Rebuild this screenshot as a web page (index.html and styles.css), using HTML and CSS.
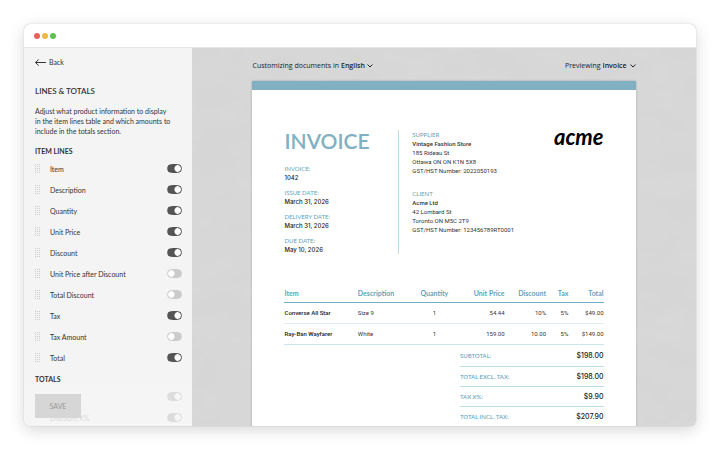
FILE: index.html
```html
<!DOCTYPE html>
<html lang="en">
<head>
    <meta charset="UTF-8">
    <meta name="viewport" content="width=device-width, initial-scale=1.0">
    <title>Lines &amp; Totals</title>
    <link rel="stylesheet" href="styles.css">
</head>
<body>
    <div class="window">
        <div class="titlebar">
            <span class="dot red"></span>
            <span class="dot yellow"></span>
            <span class="dot green"></span>
        </div>
        <div class="content">
            <aside class="sidebar">
                <a class="back" href="#">
                    <svg width="11" height="7" viewBox="0 0 11 7" fill="none" stroke="currentColor" stroke-linecap="round" stroke-linejoin="round"><path d="M10.5 3.5H.7M3.4.7.6 3.5l2.8 2.8"/></svg>
                    Back
                </a>
                <h1>LINES &amp; TOTALS</h1>
                <p class="intro">Adjust what product information to display in the item lines table and which amounts to include in the totals section.</p>

                <h2>ITEM LINES</h2>
                <ul class="options">
                    <li><span class="grip"></span><label for="item">Item</label><input type="checkbox" id="item" checked></li>
                    <li><span class="grip"></span><label for="description">Description</label><input type="checkbox" id="description" checked></li>
                    <li><span class="grip"></span><label for="quantity">Quantity</label><input type="checkbox" id="quantity" checked></li>
                    <li><span class="grip"></span><label for="unit-price">Unit Price</label><input type="checkbox" id="unit-price" checked></li>
                    <li><span class="grip"></span><label for="discount">Discount</label><input type="checkbox" id="discount" checked></li>
                    <li><span class="grip"></span><label for="unit-price-after">Unit Price after Discount</label><input type="checkbox" id="unit-price-after"></li>
                    <li><span class="grip"></span><label for="total-discount">Total Discount</label><input type="checkbox" id="total-discount"></li>
                    <li><span class="grip"></span><label for="tax">Tax</label><input type="checkbox" id="tax" checked></li>
                    <li><span class="grip"></span><label for="tax-amount">Tax Amount</label><input type="checkbox" id="tax-amount"></li>
                    <li><span class="grip"></span><label for="total">Total</label><input type="checkbox" id="total" checked></li>
                </ul>

                <h2 class="totals-title">TOTALS</h2>
                <ul class="options">
                    <li><span class="grip empty"></span><label for="subtotal">Subtotal</label><input type="checkbox" id="subtotal" checked></li>
                    <li><span class="grip empty"></span><label for="discount-x">Discount X%</label><input type="checkbox" id="discount-x" checked></li>
                </ul>

                <div class="save-bar">
                    <button class="save" type="button">SAVE</button>
                </div>
            </aside>

            <main class="preview">
                <div class="toolbar">
                    <div class="picker">
                        <label for="language">Customizing documents in</label>
                        <select id="language"><option>English</option></select>
                        <svg width="6" height="4" viewBox="0 0 6 4" fill="none" stroke="currentColor" stroke-linecap="round"><path d="M.8.8 3 3 5.2.8"/></svg>
                    </div>
                    <div class="picker">
                        <label for="document">Previewing</label>
                        <select id="document"><option>Invoice</option></select>
                        <svg width="6" height="4" viewBox="0 0 6 4" fill="none" stroke="currentColor" stroke-linecap="round"><path d="M.8.8 3 3 5.2.8"/></svg>
                    </div>
                </div>

                <article class="paper">
                    <header class="invoice-header">
                        <div class="meta">
                            <h2 class="invoice-title">INVOICE</h2>
                            <dl>
                                <dt>INVOICE:</dt>
                                <dd>1042</dd>
                                <dt>ISSUE DATE:</dt>
                                <dd>March 31, 2026</dd>
                                <dt>DELIVERY DATE:</dt>
                                <dd>March 31, 2026</dd>
                                <dt>DUE DATE:</dt>
                                <dd>May 10, 2026</dd>
                            </dl>
                        </div>
                        <div class="parties">
                            <address>
                                <span class="role">SUPPLIER</span>
                                <strong>Vintage Fashion Store</strong>
                                <span>185 Rideau St</span>
                                <span>Ottawa ON ON K1N 5X8</span>
                                <span>GST/HST Number: 2022050193</span>
                            </address>
                            <address>
                                <span class="role">CLIENT</span>
                                <strong>Acme Ltd</strong>
                                <span>42 Lombard St</span>
                                <span>Toronto ON M5C 2T9</span>
                                <span>GST/HST Number: 123456789RT0001</span>
                            </address>
                        </div>
                        <div class="logo">acme</div>
                    </header>

                    <table class="lines">
                        <thead>
                            <tr>
                                <th class="col-item">Item</th>
                                <th class="col-description">Description</th>
                                <th class="col-quantity">Quantity</th>
                                <th class="col-price">Unit Price</th>
                                <th class="col-discount">Discount</th>
                                <th class="col-tax">Tax</th>
                                <th class="col-total">Total</th>
                            </tr>
                        </thead>
                        <tbody>
                            <tr>
                                <td class="name">Converse All Star</td>
                                <td>Size 9</td>
                                <td class="center">1</td>
                                <td class="number">54.44</td>
                                <td class="number">10%</td>
                                <td class="number">5%</td>
                                <td class="number">$49.00</td>
                            </tr>
                            <tr>
                                <td class="name">Ray-Ban Wayfarer</td>
                                <td>White</td>
                                <td class="center">1</td>
                                <td class="number">159.00</td>
                                <td class="number">10.00</td>
                                <td class="number">5%</td>
                                <td class="number">$149.00</td>
                            </tr>
                        </tbody>
                    </table>

                    <table class="totals">
                        <tr><th>SUBTOTAL:</th><td>$198.00</td></tr>
                        <tr><th>TOTAL EXCL. TAX:</th><td>$198.00</td></tr>
                        <tr><th>TAX X%:</th><td>$9.90</td></tr>
                        <tr><th>TOTAL INCL. TAX:</th><td>$207.90</td></tr>
                    </table>
                </article>
            </main>
        </div>
    </div>
</body>
</html>
```
FILE: styles.css
```css
* {
    box-sizing: border-box;
}

body {
    margin: 0;
    padding: 24px;
    height: 100vh;
    background-color: #fff;
    color: #333;
    font-family: Lato, sans-serif;
    font-size: 7px;
    line-height: 10px;
}

h1, h2, p, ul, dl, dd {
    margin: 0;
    padding: 0;
}

.window {
    display: flex;
    flex-direction: column;
    height: 100%;
    overflow: hidden;
    border-radius: 6px;
    background-color: #fff;
    box-shadow: 0 0 1px rgba(0, 0, 0, 0.35), 0 4px 16px rgba(0, 0, 0, 0.16);
}

.titlebar {
    display: flex;
    flex: none;
    align-items: center;
    gap: 2px;
    height: 24px;
    padding: 0 10px;
    border-bottom: 1px solid #e6e6e6;
}

.dot {
    width: 6px;
    height: 6px;
    border-radius: 50%;
}

.red {
    background-color: #e9605a;
}

.yellow {
    background-color: #efb844;
}

.green {
    background-color: #5dc24c;
}

.content {
    display: flex;
    flex: 1;
    min-height: 0;
}

/* Sidebar */
.sidebar {
    position: relative;
    width: 25%;
    padding: 8px 10px 0 11px;
    overflow: hidden;
    background-color: #f4f4f4;
}

.back {
    display: flex;
    align-items: center;
    gap: 3px;
    height: 12px;
    color: #333;
    text-decoration: none;
}

.sidebar h1 {
    margin: 17px 0 9px;
    font-size: 8px;
    font-weight: 600;
    line-height: 12px;
}

.sidebar h2 {
    margin-top: 8px;
    font-size: 7px;
    font-weight: 700;
    line-height: 14px;
}

.sidebar .intro {
    padding-right: 10px;
}

.sidebar .totals-title {
    margin-top: 4px;
}

.options {
    list-style-type: none;
}

.options li {
    display: flex;
    align-items: center;
    height: 21px;
}

.options label {
    flex: 1;
}

.grip {
    width: 5px;
    height: 9px;
    margin-right: 10px;
    background-image: radial-gradient(circle at 0 0, #ccc 1px, transparent 1px);
    background-size: 2px 2px;
}

.empty {
    background-image: none;
}

.options input {
    appearance: none;
    width: 15px;
    height: 9px;
    margin: 0;
    border: 1px solid #cbcbcb;
    border-radius: 5px;
    background: radial-gradient(circle at 3px 50%, #fff 3px, #cbcbcb 4px);
    cursor: pointer;
}

.options input:checked {
    border-color: #555;
    background: radial-gradient(circle at 10px 50%, #fff 3px, #555 4px);
}

.save-bar {
    position: absolute;
    left: 0;
    right: 0;
    bottom: 0;
    padding: 10px 11px 8px;
    background-color: rgba(244, 244, 244, 0.85);
}

.save {
    display: block;
    width: 46px;
    height: 24px;
    border: none;
    background-color: #d6d6d6;
    color: #999;
    font-family: inherit;
    font-size: 7px;
}

/* Preview */
.preview {
    flex: 1;
    min-width: 0;
    padding: 12px 9% 0;
    overflow: hidden;
    background-color: #d8d8d8;
    background-image: url("data:image/svg+xml,%3Csvg xmlns='http://www.w3.org/2000/svg' width='504' height='378'%3E%3Cfilter id='n'%3E%3CfeTurbulence type='fractalNoise' baseFrequency='.02 .04' numOctaves='5'/%3E%3CfeColorMatrix values='0 0 0 0 .5 0 0 0 0 .5 0 0 0 0 .5 .16 0 0 0 -.04'/%3E%3C/filter%3E%3Crect width='100%25' height='100%25' filter='url(%23n)'/%3E%3C/svg%3E");
}

.toolbar {
    display: flex;
    justify-content: space-between;
    height: 21px;
    font-family: "Open Sans", sans-serif;
}

.picker {
    display: flex;
    align-items: center;
    gap: 2px;
    height: 12px;
    color: #222;
}

.picker select {
    appearance: none;
    height: 10px;
    padding: 0;
    border: none;
    background: none;
    color: inherit;
    font-family: inherit;
    font-size: inherit;
    font-weight: 600;
    line-height: 10px;
}

.paper {
    min-height: 100%;
    padding: 40px 32px 0;
    border-top: 9px solid #80b0c2;
    background-color: #fff;
    box-shadow: 0 0 2px rgba(0, 0, 0, 0.25);
    font-family: Inter, sans-serif;
}

.invoice-header {
    display: flex;
    align-items: flex-start;
    margin-bottom: 30px;
}

.meta {
    width: 36%;
    height: 124px;
    border-right: 1px solid #b9dce6;
}

.invoice-title {
    margin-bottom: 12px;
    color: #80b0c2;
    font-family: Lato, sans-serif;
    font-size: 21px;
    font-weight: 600;
    line-height: 22px;
}

.meta dt {
    color: #5fa3ba;
    font-family: Lato, sans-serif;
    font-size: 6px;
    line-height: 9px;
}

.meta dd {
    margin-bottom: 5px;
    color: #222;
    font-size: 6px;
    font-weight: 500;
    line-height: 10px;
}

.parties {
    flex: 1;
    padding-left: 13px;
}

.parties address {
    display: flex;
    flex-direction: column;
    margin-bottom: 14px;
    font-family: Roboto, sans-serif;
    font-size: 6px;
    font-style: normal;
    line-height: 9px;
    white-space: nowrap;
}

.parties strong {
    font-weight: 500;
}

.parties .role {
    color: #5fa3ba;
    font-family: Lato, sans-serif;
}

.logo {
    color: #000;
    font-family: Lato, cursive;
    font-size: 22px;
    font-style: italic;
    font-weight: 700;
    line-height: 14px;
}

.lines {
    width: 100%;
    border-collapse: collapse;
    table-layout: fixed;
}

.lines th {
    height: 18px;
    padding: 0;
    border-bottom: 1px solid #6fb0c4;
    color: #5fa3ba;
    font-family: Lato, sans-serif;
    font-size: 7px;
    font-weight: 700;
    text-align: right;
}

.lines td {
    height: 21px;
    padding: 0;
    border-bottom: 1px solid #e2ecef;
    font-family: Roboto, sans-serif;
    font-size: 6px;
}

.lines tr:last-child td {
    border-bottom-color: #cbe5ec;
}

.lines .name {
    color: #222;
    font-weight: 500;
    white-space: nowrap;
}

.lines .center {
    text-align: center;
}

.lines .number {
    text-align: right;
}

.lines .col-item {
    width: 23%;
    text-align: left;
}

.lines .col-description {
    width: 15%;
    text-align: left;
}

.lines .col-quantity {
    width: 18%;
    text-align: center;
}

.col-price {
    width: 13%;
}

.col-discount {
    width: 13%;
}

.col-tax {
    width: 7%;
}

.col-total {
    width: 11%;
}

.totals {
    width: 45%;
    margin-top: 2px;
    margin-left: auto;
    border-collapse: collapse;
}

.totals th,
.totals td {
    height: 20px;
    padding: 0;
    border-bottom: 1px solid #b9dce6;
}

.totals th {
    color: #5fa3ba;
    font-family: Lato, sans-serif;
    font-size: 6px;
    font-weight: 500;
    text-align: left;
}

.totals td {
    color: #222;
    font-size: 7px;
    font-weight: 500;
    text-align: right;
}
```
